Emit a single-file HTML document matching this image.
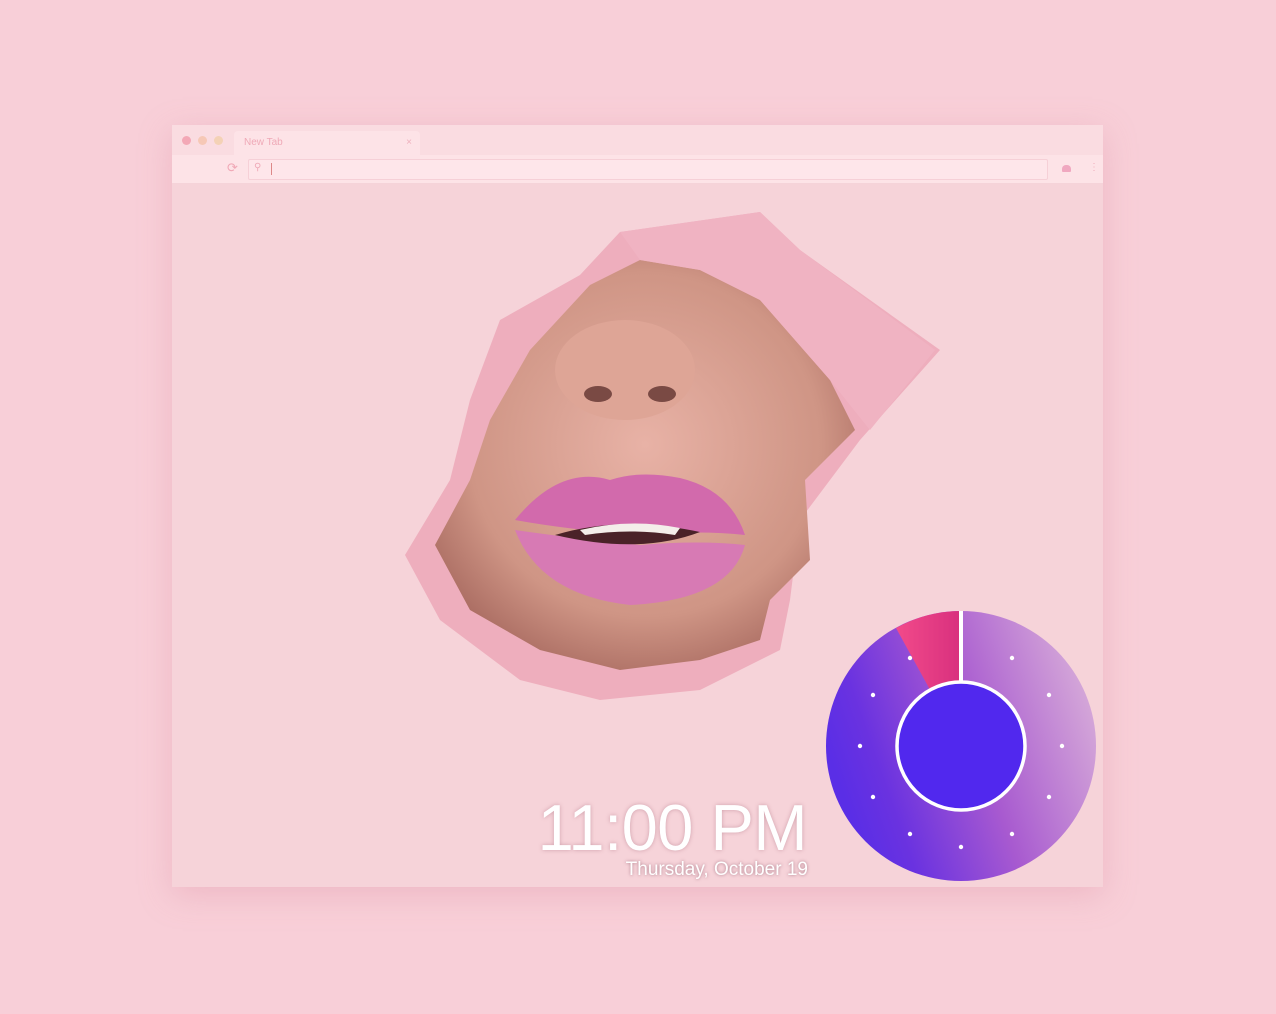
<!DOCTYPE html>
<html><head><meta charset="utf-8"><style>
html,body{margin:0;padding:0;width:1276px;height:1014px;background:#f8cfd8;overflow:hidden;font-family:"Liberation Sans",sans-serif}
.win{position:absolute;left:172px;top:125px;width:931px;height:762px;background:#f6d3d9;box-shadow:0 8px 30px rgba(220,140,160,.35)}
.tabs{position:absolute;left:0;top:0;width:931px;height:30px;background:#fadce1}
.tool{position:absolute;left:0;top:30px;width:931px;height:28px;background:#fde3e7;border-bottom:1px solid #f5d3d9}
.dot{position:absolute;top:11px;width:9px;height:9px;border-radius:50%}
.tab{position:absolute;left:62px;top:6px;width:186px;height:24px;background:#fde3e7;border-radius:4px 4px 0 0;font-size:10px;color:#efa9b7;line-height:24px;padding-left:10px;box-sizing:border-box}
.url{position:absolute;left:76px;top:4px;width:798px;height:19px;border:1px solid #f6d0d7;border-radius:2px;background:#fee6ea}
.time{position:absolute;right:469px;top:790px;color:#fff;font-size:65px;font-weight:300;letter-spacing:-0.5px;text-shadow:0 0 4px rgba(150,80,100,.4)}
.date{position:absolute;right:468px;top:859px;color:#fff;font-size:19px;text-shadow:0 0 3px rgba(120,60,80,.6)}
</style></head><body>
<div class="win">
 <div class="tabs">
  <div class="dot" style="left:10px;background:#f3a8b6"></div>
  <div class="dot" style="left:26px;background:#f6c8b6"></div>
  <div class="dot" style="left:42px;background:#f4d2b6"></div>
  <div class="tab">New Tab<span style="position:absolute;right:8px;color:#eeb0bd">×</span></div>
 </div>
 <div class="tool">
  <span style="position:absolute;left:55px;top:5px;color:#f0a8b6;font-size:13px">⟳</span>
  <div class="url"><span style="position:absolute;left:5px;top:2px;font-size:10px;color:#efaab8">⚲</span><span style="position:absolute;left:22px;top:3px;width:1px;height:12px;background:#d88"></span></div>
  <div style="position:absolute;left:890px;top:10px;width:9px;height:7px;background:#f0a8c0;border-radius:4px 4px 1px 1px"></div>
  <div style="position:absolute;left:917px;top:7px;color:#efb0bd;font-size:10px">⋮</div>
 </div>
</div>
<svg width="1276" height="1014" style="position:absolute;left:0;top:0">
 <defs>
  <radialGradient id="sk" cx="0.5" cy="0.45" r="0.6"><stop offset="0" stop-color="#e8b2a6"/><stop offset="0.7" stop-color="#cf9585"/><stop offset="1" stop-color="#a86a60"/></radialGradient>
  <linearGradient id="ring" x1="1" y1="0.15" x2="0" y2="0.5"><stop offset="0" stop-color="#dcb4da"/><stop offset="0.5" stop-color="#a85ad0"/><stop offset="0.85" stop-color="#6a32e0"/><stop offset="1" stop-color="#5a2ee6"/></linearGradient>
  <linearGradient id="pk" x1="0" y1="0" x2="1" y2="0"><stop offset="0" stop-color="#f24a8a"/><stop offset="1" stop-color="#d8307e"/></linearGradient>
 </defs>
 <path d="M620 232 L760 212 L800 250 L940 350 L860 440 L800 520 L790 600 L780 650 L700 690 L600 700 L520 680 L440 620 L405 555 L450 480 L470 400 L500 320 L580 275 Z" fill="#eeaebd"/>
 <path d="M590 285 L640 260 L700 270 L760 300 L830 380 L855 430 L805 480 L810 560 L770 600 L760 640 L700 660 L620 670 L540 650 L470 610 L435 545 L470 480 L490 420 L530 350 Z" fill="url(#sk)"/>
 <path d="M620 232 L760 212 L800 250 L935 350 L870 430 L830 380 L760 300 L700 270 L640 260 Z" fill="#f0b3c2"/>
 <ellipse cx="625" cy="370" rx="70" ry="50" fill="#dea596"/>
 <ellipse cx="598" cy="394" rx="14" ry="8" fill="#7a4a44"/>
 <ellipse cx="662" cy="394" rx="14" ry="8" fill="#7a4a44"/>
 <path d="M515 520 Q560 465 610 480 Q640 470 680 478 Q730 490 745 535 Q700 530 640 535 Q570 530 515 520 Z" fill="#d26aac"/>
 <path d="M515 530 Q570 538 640 545 Q700 540 745 545 Q730 600 630 605 Q540 595 515 530 Z" fill="#d77ab4"/>
 <path d="M555 535 Q620 515 700 532 Q640 555 555 535 Z" fill="#4a2228"/>
 <path d="M580 530 Q630 518 680 528 L675 535 Q630 528 585 535 Z" fill="#f4eeea"/>
 <circle cx="961" cy="746" r="135" fill="url(#ring)"/>
 <path d="M961 746 L961 611 A135 135 0 0 0 896 628 Z" fill="url(#pk)"/>
 <line x1="961" y1="611" x2="961" y2="682" stroke="#fff" stroke-width="4"/>
 <circle cx="961" cy="746" r="64" fill="#5128ee" stroke="#fff" stroke-width="3.5"/>
 <g fill="#fff">
  <circle cx="1012" cy="658" r="2.2"/><circle cx="1049" cy="695" r="2.2"/><circle cx="1062" cy="746" r="2.2"/>
  <circle cx="1049" cy="797" r="2.2"/><circle cx="1012" cy="834" r="2.2"/><circle cx="961" cy="847" r="2.2"/>
  <circle cx="910" cy="834" r="2.2"/><circle cx="873" cy="797" r="2.2"/><circle cx="860" cy="746" r="2.2"/>
  <circle cx="873" cy="695" r="2.2"/><circle cx="910" cy="658" r="2.2"/>
 </g>
</svg>
<div class="time">11:00 PM</div>
<div class="date">Thursday, October 19</div>
</body></html>
